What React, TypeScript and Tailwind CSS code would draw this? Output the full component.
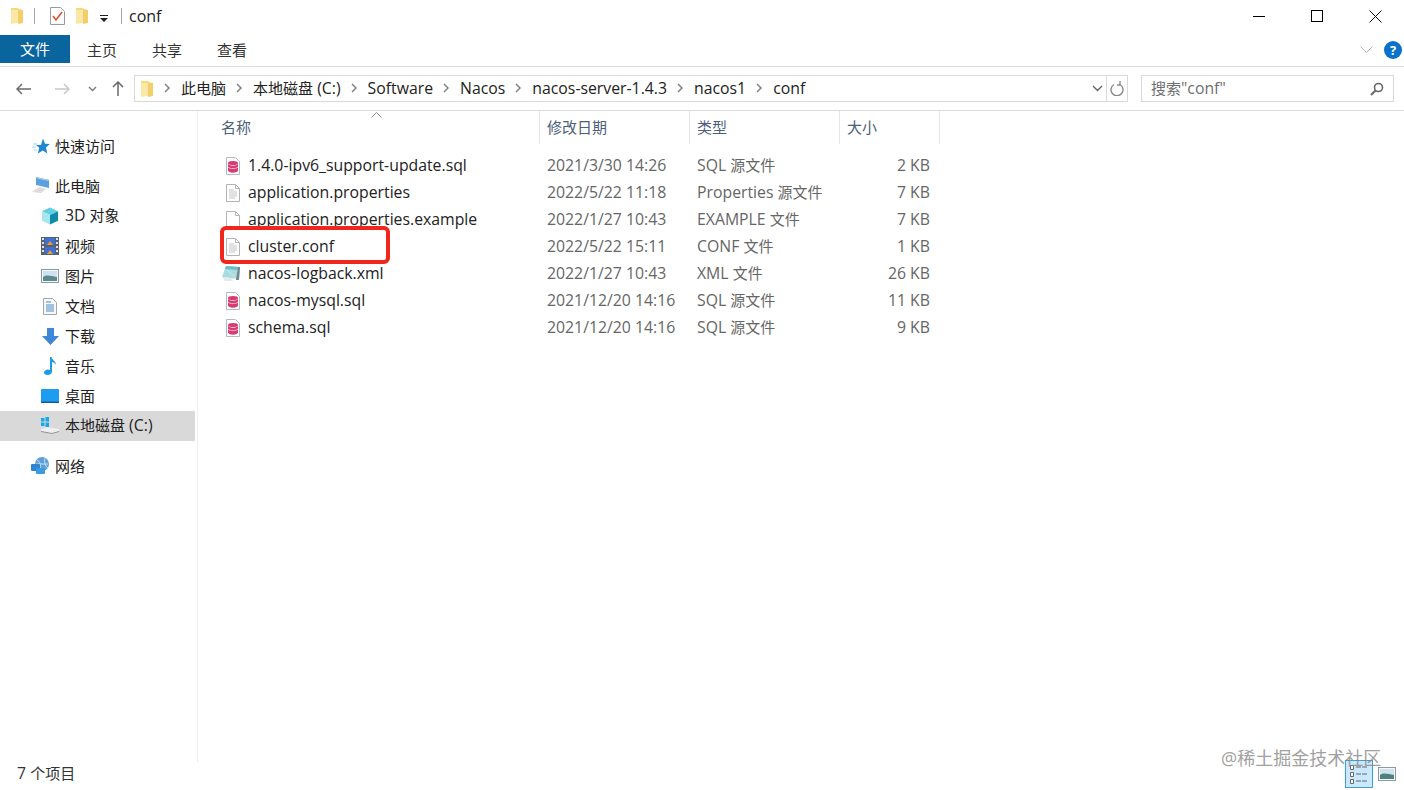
import React from "react";

const font = { fontFamily: '"Open Sans","Noto Sans CJK SC",sans-serif' };

function T({ t }: { t: string }) {
  return (
    <span>
      {t.split(/([\u4e00-\u9fff]+)/).map((part, i) =>
        part === "" ? null : /[\u4e00-\u9fff]/.test(part) ? (
          <span key={i}>{part}</span>
        ) : (
          <span key={i} className="text-[15.8px]">
            {part}
          </span>
        ),
      )}
    </span>
  );
}

function Folder({ className = "" }: { className?: string }) {
  return (
    <svg className={className} width="14" height="18" viewBox="0 0 14 18">
      <path d="M1 1h7l1 2h3v12H1z" fill="#f6d978" />
      <path d="M1 3h12v12l-12 2z" fill="#fbe7a6" />
      <path d="M8 2l5 1v13l-5 1z" fill="#f3cf6a" />
    </svg>
  );
}

function Chevron({ className = "" }: { className?: string }) {
  return (
    <svg className={className} width="6" height="10" viewBox="0 0 6 10" fill="none">
      <path d="M1 1l4 4-4 4" stroke="#7a7a7a" strokeWidth="1.4" />
    </svg>
  );
}

function SqlIcon() {
  return (
    <svg width="16" height="18" viewBox="0 0 16 18">
      <path d="M1.500.5h9l4 4v13h-13z" fill="#fff" stroke="#b9b9b9" />
      <ellipse cx="8" cy="6" rx="5" ry="2" fill="#d83a72" />
      <path d="M3 6.500v7c0 1.200 2.200 2.200 5 2.200s5-1 5-2.200v-7c0 1.200-2.200 2.200-5 2.200S3 7.700 3 6.500z" fill="#d83a72" />
      <path d="M3 10c1 1.200 2.800 1.600 5 1.600s4-.4 5-1.600" stroke="#f3b6cc" fill="none" />
    </svg>
  );
}

function TextIcon() {
  return (
    <svg width="16" height="18" viewBox="0 0 16 18" fill="none">
      <path d="M1.500.5h9l4 4v13h-13z" fill="#fff" stroke="#b4b4b4" />
      <path d="M10.500.5v4h4" stroke="#b4b4b4" />
      <path d="M4 6h5M4 8h8M4 10h8M4 12h8M4 14h6" stroke="#c4c4c4" />
    </svg>
  );
}

function BlankIcon() {
  return (
    <svg width="16" height="18" viewBox="0 0 16 18" fill="none">
      <path d="M1.500.5h9l4 4v13h-13z" fill="#fff" stroke="#b4b4b4" />
      <path d="M10.500.5v4h4" stroke="#b4b4b4" />
    </svg>
  );
}

function XmlIcon() {
  return (
    <svg width="20" height="17" viewBox="0 0 20 17">
      <path d="M5 1l14 1-1 12L1 12z" fill="#a9dbe0" />
      <path d="M5 1l14 1-1 3L4 4z" fill="#6fbcc4" />
      <path d="M1 12l9 1 2 3H4z" fill="#e4e9ea" />
      <path d="M17 2h2l-1 13h-3z" fill="#75878c" />
      <path d="M6 5l8 7" stroke="#c8ecee" />
    </svg>
  );
}

function NavIcon({ name }: { name: string }) {
  if (name === "star")
    return (
      <svg width="18" height="17" viewBox="0 0 18 17">
        <path d="M11 .500l2 5.300 4.800.2-3.800 3.400 1.300 6.100-4.500-3.100-5 3.100 1.500-5.700L4 7h5z" fill="#1f86d0" />
        <path d="M1 6h4M0 9h4M2 12h3" stroke="#9dcdee" />
      </svg>
    );
  if (name === "pc")
    return (
      <svg width="20" height="18" viewBox="0 0 20 18">
        <path d="M5 0l13 3v8L5 8z" fill="#5d9fdc" />
        <path d="M5 0l13 3-1 1L6 1.500z" fill="#a5cdf0" />
        <path d="M1 15l7-5 7 2-5 4z" fill="#dcdcdc" />
      </svg>
    );
  if (name === "3d")
    return (
      <svg width="19" height="18" viewBox="0 0 19 18">
        <path d="M9.500 0L18 4l-8.500 4L1 4z" fill="#5fd0e3" />
        <path d="M1 4l8.500 4v10L1 14z" fill="#a8e6ef" />
        <path d="M18 4L9.500 8v10L18 14z" fill="#0f8ba8" />
      </svg>
    );
  if (name === "video")
    return (
      <svg width="18" height="18" viewBox="0 0 18 18">
        <rect width="18" height="18" fill="#5a6068" />
        <path d="M1 1h2v2H1zM1 5h2v2H1zM1 9h2v2H1zM1 13h2v2H1zM15 1h2v2h-2zM15 5h2v2h-2zM15 9h2v2h-2zM15 13h2v2h-2z" fill="#e3e3e3" />
        <rect x="4" y="1" width="10" height="7" fill="#3c72d8" />
        <rect x="4" y="10" width="10" height="7" fill="#3c72d8" />
        <path d="M6 8l3-4 3 4zM6 17l3-4 3 4z" fill="#e89a35" />
      </svg>
    );
  if (name === "pic")
    return (
      <svg width="18" height="14" viewBox="0 0 18 14">
        <rect x=".5" y=".5" width="17" height="13" fill="#f6f8fa" stroke="#8a99a6" />
        <rect x="2" y="2" width="14" height="10" fill="#cfe2f0" />
        <path d="M2 8c4-3 8-1 14 0v4H2z" fill="#5d8a8a" />
      </svg>
    );
  if (name === "doc")
    return (
      <svg width="14" height="17" viewBox="0 0 14 17" fill="none">
        <path d="M.5.5h9l4 4v12H.5z" fill="#f8f8f8" stroke="#a5a5a5" />
        <path d="M3 4h5M3 7h8M3 9h8M3 11h8M3 13h8" stroke="#4a8dc7" />
      </svg>
    );
  if (name === "down")
    return (
      <svg width="17" height="17" viewBox="0 0 17 17">
        <path d="M5 0h7v8h5l-8.500 9L0 8h5z" fill="#3d87d6" />
      </svg>
    );
  if (name === "music")
    return (
      <svg width="13" height="18" viewBox="0 0 13 18">
        <path d="M6 0h1.500c.5 3 4.500 4 4.500 8-1-2-3-3-4-3v9.500C8 16.500 6 18 3.500 18 1.500 18 0 17 0 15.500S2 12.500 4 12.500c.8 0 1.500.2 2 .5z" fill="#1e9be6" />
      </svg>
    );
  if (name === "desk")
    return (
      <svg width="18" height="14" viewBox="0 0 18 14">
        <rect width="18" height="13" rx="1" fill="#1d9cf0" />
        <rect y="12.500" width="18" height="1.500" fill="#0d5f9c" />
      </svg>
    );
  if (name === "disk")
    return (
      <svg width="20" height="18" viewBox="0 0 20 18">
        <path d="M1 1h3.500v3.500H1zM5.500 0H9v4.500H5.500zM1 5.500h3.500V9H1zM5.500 5.500H9V10H5.500z" fill="#19a7e8" />
        <path d="M1 12l6-2 12 2v3l-7 2-11-2z" fill="#efefef" />
        <path d="M1 14l11 2 7-2v1l-7 2-11-2z" fill="#8f8f8f" />
      </svg>
    );
  return (
    <svg width="19" height="18" viewBox="0 0 19 18">
      <circle cx="11" cy="7" r="7" fill="#5f9fd6" />
      <path d="M6 3c3 1 4 5 3 10M14 1c-1 4 0 8 3 10M5 7h12" stroke="#c5e0f4" fill="none" />
      <rect x="0" y="7" width="9" height="7" rx="1" fill="#2f86d0" />
      <rect x="5" y="11" width="9" height="6" rx="1" fill="#3d9ae0" />
    </svg>
  );
}

const navItems = [
  ["pc", "此电脑", false],
  ["3d", "3D 对象", true],
  ["video", "视频", true],
  ["pic", "图片", true],
  ["doc", "文档", true],
  ["down", "下载", true],
  ["music", "音乐", true],
  ["desk", "桌面", true],
] as const;

const files = [
  ["sql", "1.4.0-ipv6_support-update.sql", "2021/3/30 14:26", "SQL 源文件", "2 KB"],
  ["text", "application.properties", "2022/5/22 11:18", "Properties 源文件", "7 KB"],
  ["blank", "application.properties.example", "2022/1/27 10:43", "EXAMPLE 文件", "7 KB"],
  ["text", "cluster.conf", "2022/5/22 15:11", "CONF 文件", "1 KB"],
  ["xml", "nacos-logback.xml", "2022/1/27 10:43", "XML 文件", "26 KB"],
  ["sql", "nacos-mysql.sql", "2021/12/20 14:16", "SQL 源文件", "11 KB"],
  ["sql", "schema.sql", "2021/12/20 14:16", "SQL 源文件", "9 KB"],
];

const crumbs = ["此电脑", "本地磁盘 (C:)", "Software", "Nacos", "nacos-server-1.4.3", "nacos1", "conf"];

function FileIcon({ kind }: { kind: string }) {
  if (kind === "sql") return <SqlIcon />;
  if (kind === "text") return <TextIcon />;
  if (kind === "blank") return <BlankIcon />;
  return <XmlIcon />;
}

export default function App() {
  return (
    <div style={font} className="relative flex h-[790px] w-[1404px] flex-col overflow-hidden bg-white text-[15px] leading-none text-[#222]">
      {/* Title bar */}
      <div className="flex h-[35px] shrink-0 items-center pb-[3px]">
        <Folder className="ml-[10px]" />
        <div className="ml-[10px] h-[16px] w-px bg-[#a8a8a8]" />
        <svg className="ml-[15px]" width="15" height="18" viewBox="0 0 15 18" fill="none">
          <path d="M.5.5h10l4 4v13H.5z" fill="#fff" stroke="#9a9a9a" />
          <path d="M3 9l3 4 6-8" stroke="#d8532c" strokeWidth="1.600" />
        </svg>
        <Folder className="ml-[10px]" />
        <svg className="ml-[11px] mt-[4px]" width="8" height="7" viewBox="0 0 8 7">
          <path d="M0 0h8v1H0zM0 3h8L4 7z" fill="#222" />
        </svg>
        <div className="ml-[13px] h-[16px] w-px bg-[#a8a8a8]" />
        <span className="ml-[7px] text-[16px]">conf</span>
        <div className="ml-auto flex">
          <div className="flex h-[32px] w-[58px] items-center justify-center">
            <div className="h-px w-[12px] bg-black" />
          </div>
          <div className="flex h-[32px] w-[58px] items-center justify-center">
            <div className="h-[12px] w-[12px] border border-black" />
          </div>
          <div className="flex h-[32px] w-[58px] items-center justify-center">
            <svg width="13" height="13" viewBox="0 0 13 13" fill="none">
              <path d="M.5.5l12 12M12.500.5l-12 12" stroke="#111" />
            </svg>
          </div>
        </div>
      </div>

      {/* Ribbon tabs */}
      <div className="flex h-[32px] shrink-0 items-start border-b border-[#dadada]">
        <div className="flex h-[28px] w-[70px] items-center justify-center bg-[#0a659e] text-white">文件</div>
        <div className="ml-[17px] flex h-[31px] items-center text-[#333]">主页</div>
        <div className="ml-[35px] flex h-[31px] items-center text-[#333]">共享</div>
        <div className="ml-[35px] flex h-[31px] items-center text-[#333]">查看</div>
        <svg className="ml-auto mt-[11px]" width="13" height="8" viewBox="0 0 13 8" fill="none">
          <path d="M.5.5l6 6 6-6" stroke="#b5b5b5" />
        </svg>
        <div className="ml-[11px] mr-[2px] mt-[6px] flex h-[18px] w-[18px] items-center justify-center rounded-full bg-[#0a72c9] text-[13px] font-bold text-white">?</div>
      </div>

      {/* Address row */}
      <div className="flex h-[43px] shrink-0 items-center pb-[1px] pt-[1px]">
        <svg className="ml-[16px]" width="15" height="12" viewBox="0 0 15 12" fill="none">
          <path d="M15 6H1M6 1L1 6l5 5" stroke="#6b6b6b" strokeWidth="1.500" />
        </svg>
        <svg className="ml-[24px]" width="15" height="12" viewBox="0 0 15 12" fill="none">
          <path d="M0 6h14M9 1l5 5-5 5" stroke="#c8c8c8" strokeWidth="1.500" />
        </svg>
        <svg className="ml-[18px]" width="9" height="6" viewBox="0 0 9 6" fill="none">
          <path d="M1 1l3.500 3.500L8 1" stroke="#7a7a7a" strokeWidth="1.400" />
        </svg>
        <svg className="ml-[15px]" width="12" height="15" viewBox="0 0 12 15" fill="none">
          <path d="M6 15V1M1 6l5-5 5 5" stroke="#6b6b6b" strokeWidth="1.500" />
        </svg>
        <div className="ml-[10px] flex h-[27px] w-[994px] items-center border border-[#d9d9d9]">
          <Folder className="ml-[5px]" />
          <div className="flex items-center">
            {crumbs.map((c) => (
              <React.Fragment key={c}>
                <Chevron className="ml-[10px] mr-[11px]" />
                <T t={c} />
              </React.Fragment>
            ))}
          </div>
          <svg className="ml-auto" width="11" height="7" viewBox="0 0 11 7" fill="none">
            <path d="M1 1l4.500 4.500L10 1" stroke="#666" strokeWidth="1.400" />
          </svg>
          <div className="ml-[3px] flex h-full w-[21px] items-center justify-center border-l border-[#d9d9d9]">
            <svg width="14" height="15" viewBox="0 0 14 15" fill="none">
              <path d="M4 3.500a6 6 0 1 0 6 0M10 0v4h-3" stroke="#8a8a8a" strokeWidth="1.400" />
            </svg>
          </div>
        </div>
        <div className="ml-[13px] flex h-[27px] w-[253px] items-center justify-between border border-[#d9d9d9] px-[9px] text-[#6f6f6f]">
          <T t={'搜索"conf"'} />
          <svg width="14" height="14" viewBox="0 0 14 14" fill="none">
            <circle cx="8.500" cy="5.500" r="4" stroke="#666" strokeWidth="1.600" />
            <path d="M5.500 8.500L1 13" stroke="#666" strokeWidth="2" />
          </svg>
        </div>
      </div>

      {/* Body */}
      <div className="flex min-h-0 flex-1 border-t border-[#dadada]">
        <aside className="h-[651px] w-[198px] shrink-0 border-r border-[#efefef] pt-[20px]">
          <div className="flex h-[30px] items-center gap-[5px] pl-[32px]">
            <NavIcon name="star" />
            <span>快速访问</span>
          </div>
          <div className="h-[10px]" />
          {navItems.map(([icon, label, sub]) => (
            <div key={label} className={`flex h-[30px] items-center ${sub ? "pl-[41px]" : "pl-[31px]"}`}>
              <span className={`flex justify-center ${sub ? "w-[18px]" : "w-[20px]"}`}>
                <NavIcon name={icon} />
              </span>
              <span className={sub ? "ml-[6px]" : "ml-[4px]"}>
                <T t={label} />
              </span>
            </div>
          ))}
          <div className="flex h-[30px] w-[195px] items-center bg-[#d9d9d9] pl-[40px]">
            <NavIcon name="disk" />
            <span className="ml-[5px]">
              <T t="本地磁盘 (C:)" />
            </span>
          </div>
          <div className="h-[10px]" />
          <div className="flex h-[30px] items-center pl-[31px]">
            <NavIcon name="net" />
            <span className="ml-[5px]">网络</span>
          </div>
        </aside>

        <main className="relative min-w-0 flex-1 pl-[16px]">
          <div className="flex h-[33px] items-center text-[#4c607a]">
            <div className="relative flex h-full w-[325px] items-center pl-[7px]">
              名称
              <svg className="absolute left-[157px] top-[1px]" width="11" height="6" viewBox="0 0 11 6" fill="none">
                <path d="M.5 5.500l5-5 5 5" stroke="#8a8a8a" />
              </svg>
            </div>
            <div className="flex h-full w-[150px] items-center border-l border-[#e5e5e5] pl-[7px]">修改日期</div>
            <div className="flex h-full w-[150px] items-center border-l border-[#e5e5e5] pl-[7px]">类型</div>
            <div className="flex h-full w-[101px] items-center border-x border-[#e5e5e5] pl-[7px]">大小</div>
          </div>
          <div className="pt-[8px]">
            {files.map(([kind, name, date, type, size]) => (
              <div key={name} className="flex h-[27px] items-center">
                <div className="flex w-[326px] items-center">
                  <span className="flex w-[34px] justify-end pr-[7px]">
                    <FileIcon kind={kind} />
                  </span>
                  <span className="text-[#222]">
                    <T t={name} />
                  </span>
                </div>
                <div className="w-[150px] pl-[7px] text-[#666]">
                  <T t={date} />
                </div>
                <div className="w-[150px] pl-[7px] text-[#666]">
                  <T t={type} />
                </div>
                <div className="w-[90px] text-right text-[#666]">
                  <T t={size} />
                </div>
              </div>
            ))}
          </div>
          <div className="absolute left-[22px] top-[115px] h-[38px] w-[170px] rounded-[6px] border-[4px] border-[#f0261c]" />
        </main>
      </div>

      {/* Status */}
      <div className="absolute bottom-[1px] left-0 flex h-[30px] w-full items-center justify-between pl-[17px] pr-[8px] text-[#333]">
        <T t="7 个项目" />
        <div className="flex items-center gap-[5px]">
          <div className="flex h-[28px] w-[28px] items-center justify-center border border-[#3ea0d0] bg-[#cce8ff]">
            <svg width="20" height="21" viewBox="0 0 20 21" fill="none">
              <path d="M1.500 1.500h3v4h-3zM1.500 8.500h3v4h-3zM1.500 15.500h3v4h-3z" fill="#fff" stroke="#666" />
              <path d="M7 3h12M7 10h12M7 17h12" stroke="#666" strokeDasharray="5 1" />
            </svg>
          </div>
          <svg width="18" height="14" viewBox="0 0 18 14">
            <rect x=".5" y=".5" width="17" height="13" fill="#f6f8fa" stroke="#8a99a6" />
            <rect x="2" y="2" width="14" height="10" fill="#cfe2f0" />
            <path d="M2 8c4-3 8-1 14 0v4H2z" fill="#4f8080" />
          </svg>
        </div>
      </div>

      <div className="absolute left-[1221px] top-[748px] text-[18px] leading-[20px] text-[#8a8a8a] opacity-80">@稀土掘金技术社区</div>
    </div>
  );
}
